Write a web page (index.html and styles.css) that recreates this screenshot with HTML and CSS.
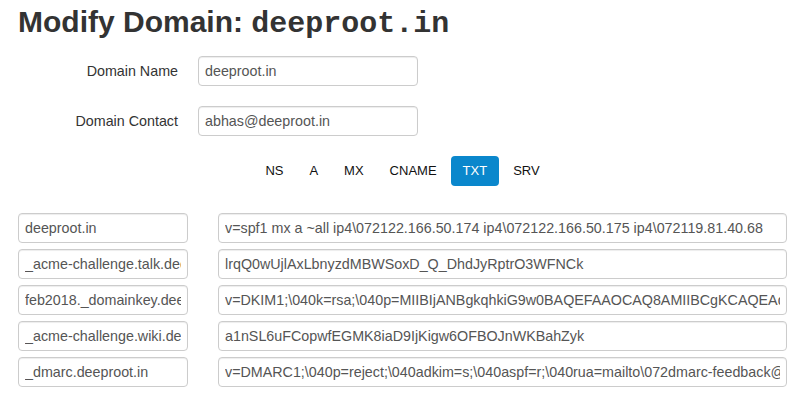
FILE: index.html
```html
<!DOCTYPE html>
<html lang="en">
<head>
    <meta charset="UTF-8">
    <title>Modify Domain</title>
    <link rel="stylesheet" href="styles.css">
</head>
<body>
    <div class="page">
        <h1 class="title">Modify Domain: <code>deeproot.in</code></h1>

        <!-- domain details -->
        <div class="form">
            <div class="form-row">
                <label class="form-label">Domain Name</label>
                <input class="field field-main" type="text" value="deeproot.in">
            </div>
            <div class="form-row">
                <label class="form-label">Domain Contact</label>
                <input class="field field-main" type="text" value="abhas@deeproot.in">
            </div>
        </div>

        <!-- record types -->
        <ul class="tabs">
            <li><a href="#">NS</a></li>
            <li><a href="#">A</a></li>
            <li><a href="#">MX</a></li>
            <li><a href="#">CNAME</a></li>
            <li class="active"><a href="#">TXT</a></li>
            <li><a href="#">SRV</a></li>
        </ul>

        <!-- records -->
        <div class="records">
            <div class="record">
                <input class="field record-name" type="text" value="deeproot.in">
                <input class="field record-value" type="text" value="v=spf1 mx a ~all ip4\072122.166.50.174 ip4\072122.166.50.175 ip4\072119.81.40.68">
            </div>
            <div class="record">
                <input class="field record-name" type="text" value="_acme-challenge.talk.deeproot.in">
                <input class="field record-value" type="text" value="lrqQ0wUjlAxLbnyzdMBWSoxD_Q_DhdJyRptrO3WFNCk">
            </div>
            <div class="record">
                <input class="field record-name" type="text" value="feb2018._domainkey.deeproot.in">
                <input class="field record-value" type="text" value="v=DKIM1;\040k=rsa;\040p=MIIBIjANBgkqhkiG9w0BAQEFAAOCAQ8AMIIBCgKCAQEAq2xWm8Jd">
            </div>
            <div class="record">
                <input class="field record-name" type="text" value="_acme-challenge.wiki.deeproot.in">
                <input class="field record-value" type="text" value="a1nSL6uFCopwfEGMK8iaD9IjKigw6OFBOJnWKBahZyk">
            </div>
            <div class="record">
                <input class="field record-name" type="text" value="_dmarc.deeproot.in">
                <input class="field record-value" type="text" value="v=DMARC1;\040p=reject;\040adkim=s;\040aspf=r;\040rua=mailto\072dmarc-feedback@deeproot.in">
            </div>
        </div>
    </div>
</body>
</html>
```

FILE: styles.css
```css
body {
    font-family: "Liberation Sans", Arial, sans-serif;
    font-size: 14.3px;
    color: #333;
    background: #fff;
    margin: 0;
    padding: 0;
}

.page {
    width: 769px;
    padding: 0 10px 0 18px;
}

.title {
    font-size: 30px;
    font-weight: bold;
    line-height: 33px;
    margin: 5px 0 15px;
}

.title code {
    font-family: "Liberation Mono", "Courier New", monospace;
    font-weight: bold;
}

.form-row {
    display: flex;
    align-items: center;
    margin-bottom: 20px;
}

.form-label {
    width: 160px;
    text-align: right;
    margin-right: 20px;
}

.field {
    box-sizing: border-box;
    height: 30px;
    padding: 5px 6px;
    font-family: "Liberation Sans", Arial, sans-serif;
    font-size: 14.3px;
    color: #555;
    background: #fff;
    border: 1px solid #ccc;
    border-radius: 4px;
    box-shadow: inset 0 1px 1px rgba(0, 0, 0, 0.075);
    outline: none;
}

.field-main {
    width: 220px;
}

.tabs {
    display: flex;
    justify-content: center;
    gap: 2px;
    list-style: none;
    margin: 6px 0 27px;
    padding: 0;
}

.tabs a {
    display: block;
    height: 30px;
    line-height: 30px;
    padding: 0 12px;
    font-size: 13px;
    color: #111;
    text-decoration: none;
    border-radius: 4px;
}

.tabs .active a {
    background: #0a87cc;
    color: #fff;
}

.records {
    display: flex;
    flex-direction: column;
    gap: 6px;
}

.record {
    display: flex;
    gap: 30px;
}

.record-name {
    width: 170px;
}

.record-value {
    width: 569px;
}
```
